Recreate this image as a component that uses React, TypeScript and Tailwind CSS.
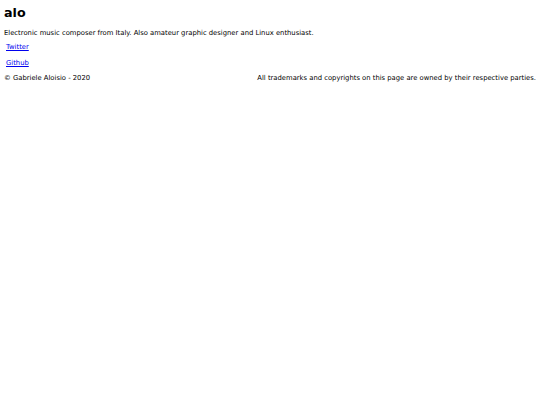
export default function App() {
  const links = [
    { name: "Twitter", href: "#twitter" },
    { name: "Github", href: "#github" },
  ];

  return (
    <div className="min-h-[405px] w-full bg-white px-[4px] text-black font-['DejaVu_Sans',sans-serif]">
      <h1 className="pt-[5px] text-[12.7px] font-bold leading-[16px]">alo</h1>
      <p className="mt-[8px] text-[6.8px] leading-[8px]">
        Electronic music composer from Italy. Also amateur graphic designer and
        Linux enthusiast.
      </p>
      <ul className="mt-[6px] flex flex-col gap-[8px] pl-[2px] text-[6.8px] leading-[8px]">
        {links.map((link) => (
          <li key={link.name}>
            <a href={link.href} className="text-[#0000ee] underline">
              {link.name}
            </a>
          </li>
        ))}
      </ul>
      <footer className="mt-[7px] flex justify-between text-[6.8px] leading-[8px]">
        <span>© Gabriele Aloisio - 2020</span>
        <span>
          All trademarks and copyrights on this page are owned by their
          respective parties.
        </span>
      </footer>
    </div>
  );
}
